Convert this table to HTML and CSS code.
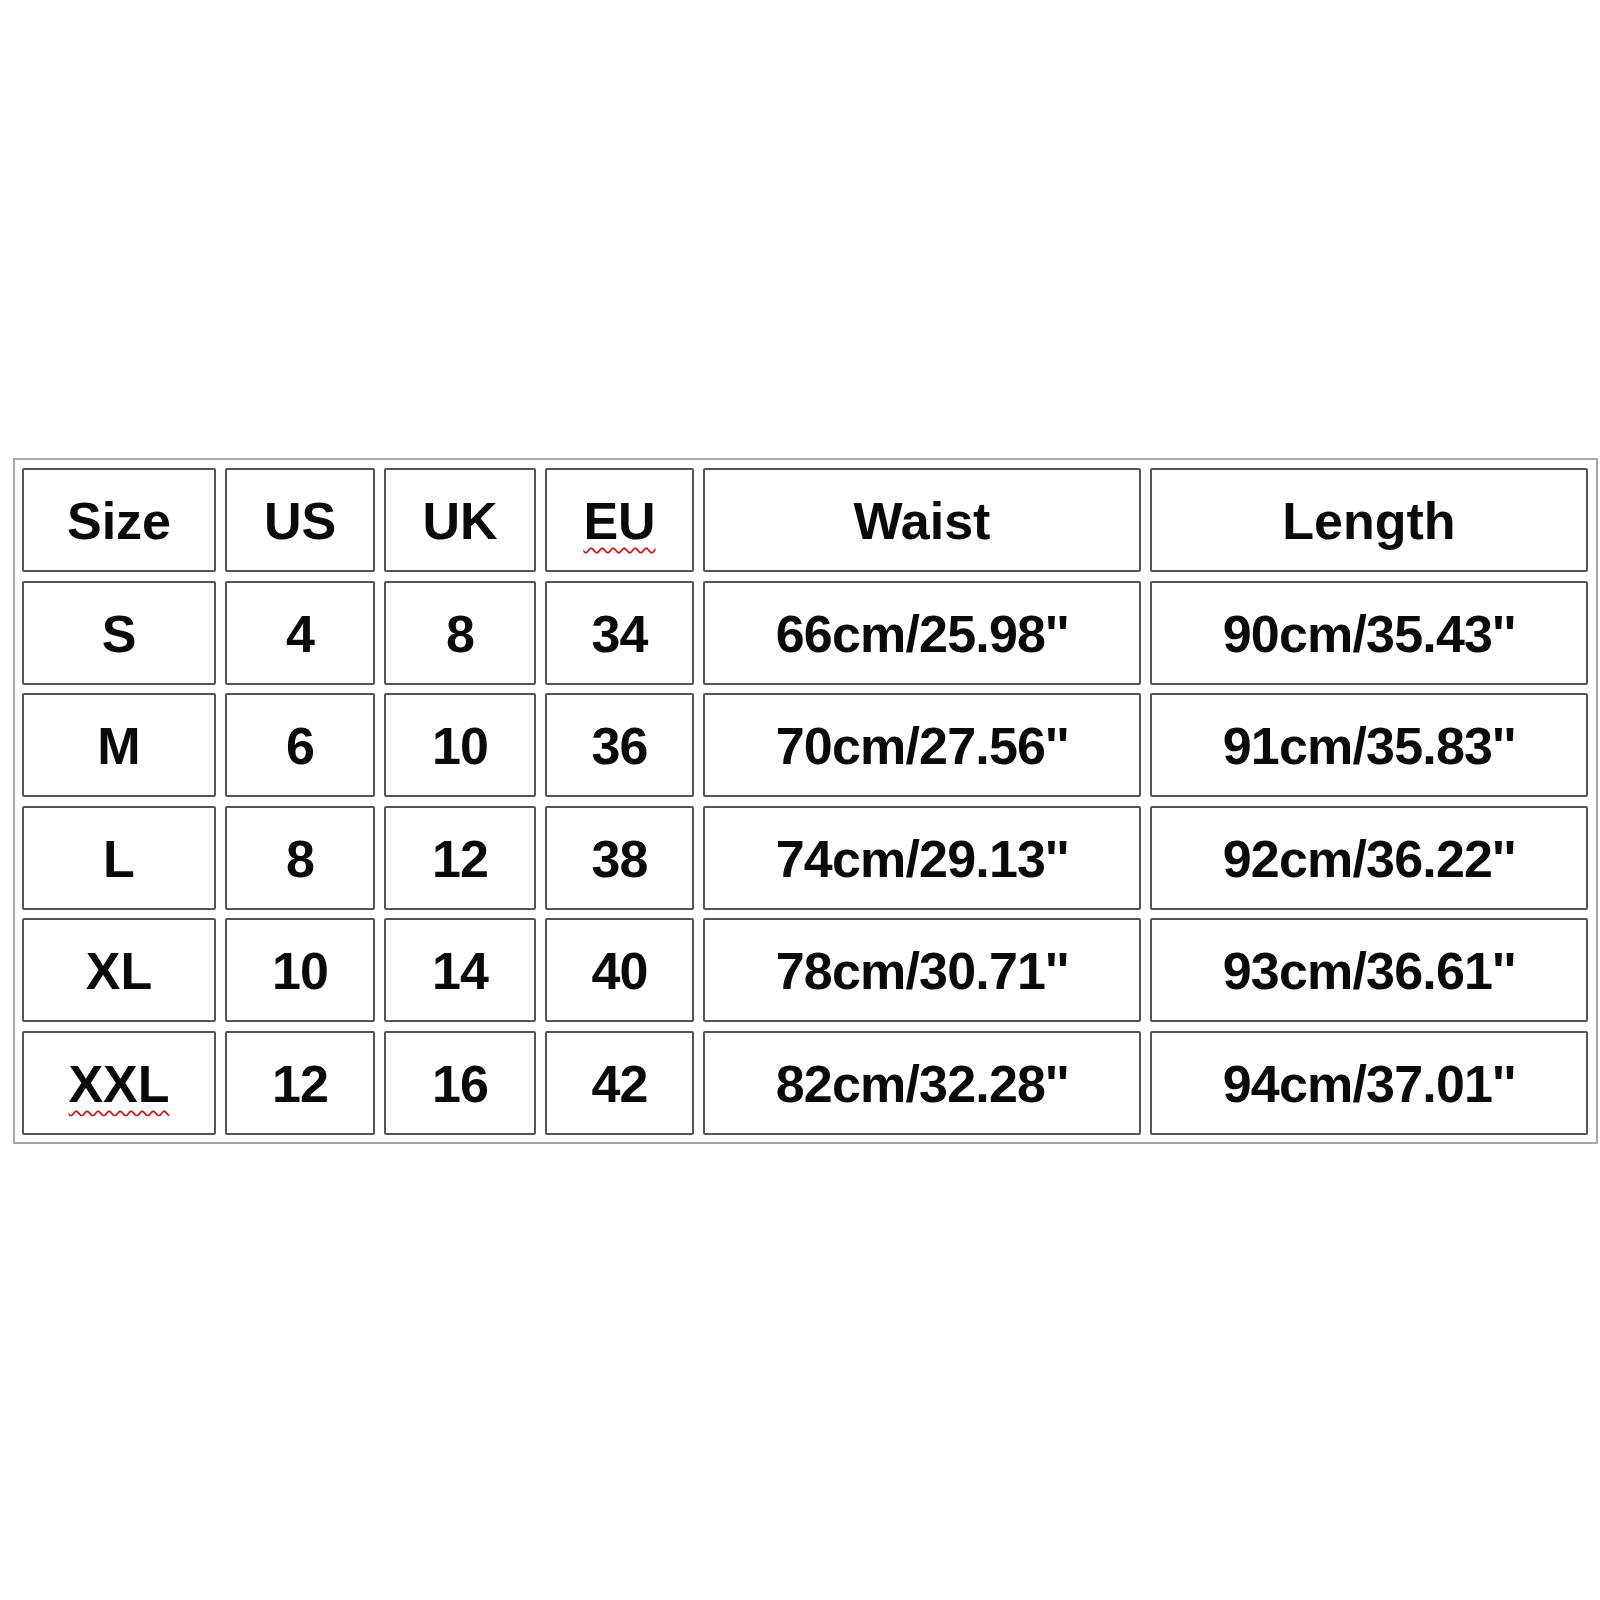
FILE: index.html
```html
<!DOCTYPE html>
<html lang="en">
<head>
<meta charset="utf-8">
<title>Size Chart</title>
<link rel="stylesheet" href="styles.css">
</head>
<body>
<div class="chart">
  <div class="grid">
    <div class="cell head">Size</div>
    <div class="cell head">US</div>
    <div class="cell head">UK</div>
    <div class="cell head"><span class="spell">EU</span></div>
    <div class="cell head">Waist</div>
    <div class="cell head">Length</div>

    <div class="cell">S</div>
    <div class="cell num">4</div>
    <div class="cell num">8</div>
    <div class="cell num">34</div>
    <div class="cell num">66cm/25.98''</div>
    <div class="cell num">90cm/35.43''</div>

    <div class="cell">M</div>
    <div class="cell num">6</div>
    <div class="cell num">10</div>
    <div class="cell num">36</div>
    <div class="cell num">70cm/27.56''</div>
    <div class="cell num">91cm/35.83''</div>

    <div class="cell">L</div>
    <div class="cell num">8</div>
    <div class="cell num">12</div>
    <div class="cell num">38</div>
    <div class="cell num">74cm/29.13''</div>
    <div class="cell num">92cm/36.22''</div>

    <div class="cell">XL</div>
    <div class="cell num">10</div>
    <div class="cell num">14</div>
    <div class="cell num">40</div>
    <div class="cell num">78cm/30.71''</div>
    <div class="cell num">93cm/36.61''</div>

    <div class="cell"><span class="spell">XXL</span></div>
    <div class="cell num">12</div>
    <div class="cell num">16</div>
    <div class="cell num">42</div>
    <div class="cell num">82cm/32.28''</div>
    <div class="cell num">94cm/37.01''</div>
  </div>
</div>
</body>
</html>
```

FILE: styles.css
```css
html, body {
  margin: 0;
  padding: 0;
  background: #ffffff;
}

body {
  font-family: "Liberation Sans", Arial, sans-serif;
  color: #0a0a0a;
}

.chart {
  width: fit-content;
  margin: 458px 0 0 13px;
  border: 2px solid #a8a8a8;
  padding: 8px 8px 7px 7px;
}

.grid {
  display: grid;
  grid-template-columns: 194px 150px 152px 149px 438px 438px;
  grid-auto-rows: 104px;
  column-gap: 9px;
  row-gap: 8.5px;
}

.cell {
  box-sizing: border-box;
  border: 2px solid #555555;
  border-radius: 2px;
  display: flex;
  align-items: center;
  justify-content: center;
  font-size: 52px;
  font-weight: 700;
  line-height: 1;
  padding-top: 2px;
}

.num {
  letter-spacing: -0.8px;
}

.spell {
  text-decoration-line: underline;
  text-decoration-style: wavy;
  text-decoration-color: #cc2222;
  text-decoration-thickness: 1.5px;
  text-underline-offset: 8px;
}
```
